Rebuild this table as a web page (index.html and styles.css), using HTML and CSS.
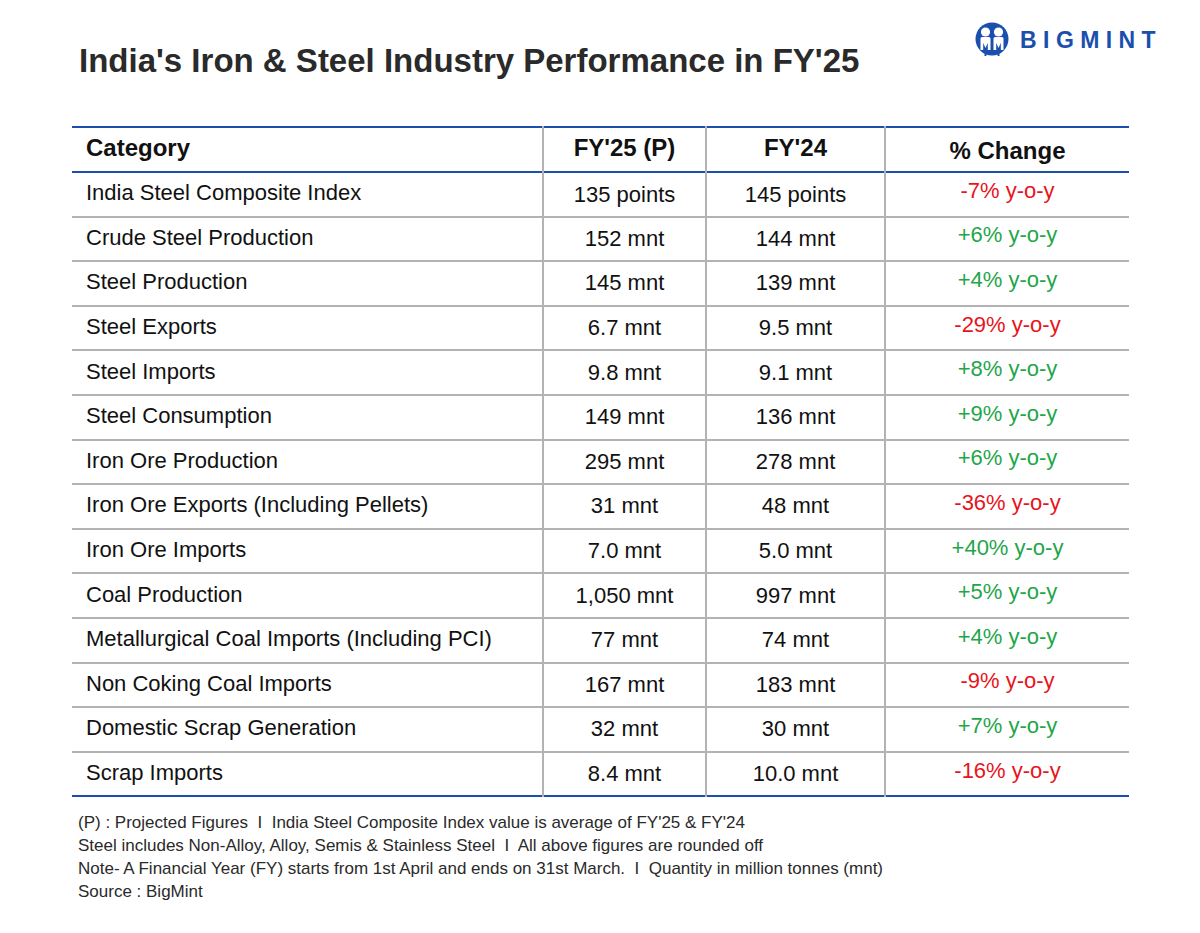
FILE: index.html
```html
<!DOCTYPE html>
<html>
<head>
<meta charset="utf-8">
<link rel="stylesheet" href="styles.css">
</head>
<body>
<div class="page">
  <header class="top">
    <h1 class="title">India's Iron &amp; Steel Industry Performance in FY'25</h1>
    <div class="logo">
      <svg class="logo-icon" width="34" height="36" viewBox="0 0 34 36">
        <circle cx="17" cy="17" r="16.5" fill="#1b4fae"/>
        <circle cx="10.5" cy="10" r="4.6" fill="#fff"/>
        <circle cx="23.5" cy="10" r="4.6" fill="#fff"/>
        <path d="M5.5 16.5 Q5.5 15 7 15 L14 15 Q15.5 15 15.5 16.5 L15.5 28 L12.8 28 L12.8 21 L10.5 26 L8.2 21 L8.2 28 L5.5 28 Z" fill="#fff"/>
        <path d="M18.5 16.5 Q18.5 15 20 15 L27 15 Q28.5 15 28.5 16.5 L28.5 28 L25.8 28 L25.8 21 L23.5 26 L21.2 21 L21.2 28 L18.5 28 Z" fill="#fff"/>
        <rect x="9.5" y="30" width="2" height="4" fill="#1b4fae"/>
        <rect x="22.5" y="30" width="2" height="4" fill="#1b4fae"/>
      </svg>
      <span class="logo-text">BIGMINT</span>
    </div>
  </header>

  <table class="data">
    <colgroup>
      <col class="c1"><col class="c2"><col class="c3"><col class="c4">
    </colgroup>
    <thead>
      <tr><th class="left">Category</th><th>FY'25 (P)</th><th>FY'24</th><th class="chg-h">% Change</th></tr>
    </thead>
    <tbody>
      <tr><td class="left">India Steel Composite Index</td><td class="lo">135 points</td><td class="lo">145 points</td><td class="neg">-7% y-o-y</td></tr>
      <tr><td class="left">Crude Steel Production</td><td>152 mnt</td><td>144 mnt</td><td class="pos">+6% y-o-y</td></tr>
      <tr><td class="left">Steel Production</td><td>145 mnt</td><td>139 mnt</td><td class="pos">+4% y-o-y</td></tr>
      <tr><td class="left">Steel Exports</td><td>6.7 mnt</td><td>9.5 mnt</td><td class="neg">-29% y-o-y</td></tr>
      <tr><td class="left">Steel Imports</td><td>9.8 mnt</td><td>9.1 mnt</td><td class="pos">+8% y-o-y</td></tr>
      <tr><td class="left">Steel Consumption</td><td>149 mnt</td><td>136 mnt</td><td class="pos">+9% y-o-y</td></tr>
      <tr><td class="left">Iron Ore Production</td><td>295 mnt</td><td>278 mnt</td><td class="pos">+6% y-o-y</td></tr>
      <tr><td class="left">Iron Ore Exports (Including Pellets)</td><td>31 mnt</td><td>48 mnt</td><td class="neg">-36% y-o-y</td></tr>
      <tr><td class="left">Iron Ore Imports</td><td>7.0 mnt</td><td>5.0 mnt</td><td class="pos">+40% y-o-y</td></tr>
      <tr><td class="left">Coal Production</td><td>1,050 mnt</td><td>997 mnt</td><td class="pos">+5% y-o-y</td></tr>
      <tr><td class="left">Metallurgical Coal Imports (Including PCI)</td><td>77 mnt</td><td>74 mnt</td><td class="pos">+4% y-o-y</td></tr>
      <tr><td class="left">Non Coking Coal Imports</td><td>167 mnt</td><td>183 mnt</td><td class="neg">-9% y-o-y</td></tr>
      <tr><td class="left">Domestic Scrap Generation</td><td>32 mnt</td><td>30 mnt</td><td class="pos">+7% y-o-y</td></tr>
      <tr><td class="left">Scrap Imports</td><td>8.4 mnt</td><td>10.0 mnt</td><td class="neg">-16% y-o-y</td></tr>
    </tbody>
  </table>

  <div class="notes">
    <p>(P) : Projected Figures &nbsp;I&nbsp; India Steel Composite Index value is average of FY'25 &amp; FY'24</p>
    <p>Steel includes Non-Alloy, Alloy, Semis &amp; Stainless Steel &nbsp;I&nbsp; All above figures are rounded off</p>
    <p>Note- A Financial Year (FY) starts from 1st April and ends on 31st March. &nbsp;I&nbsp; Quantity in million tonnes (mnt)</p>
    <p>Source : BigMint</p>
  </div>
</div>
</body>
</html>
```

FILE: styles.css
```css
* { box-sizing: border-box; }
html, body { margin: 0; padding: 0; background: #fff; }
body {
  width: 1200px;
  height: 933px;
  font-family: "Liberation Sans", Arial, sans-serif;
  color: #111;
}
.page {
  padding: 0 71px 0 72px;
}
.top {
  position: relative;
  height: 126px;
}
.title {
  margin: 0;
  padding-top: 42px;
  padding-left: 7px;
  font-size: 33px;
  line-height: 38px;
  font-weight: 700;
  color: #2a2a2a;
  letter-spacing: 0;
}
.logo {
  position: absolute;
  top: 22px;
  right: -27px;
  display: flex;
  align-items: center;
  gap: 11px;
}
.logo-icon { display: block; }
.logo-text {
  font-family: "Liberation Sans", Arial, sans-serif;
  font-weight: 700;
  font-size: 23px;
  letter-spacing: 6.4px;
  color: #1b4fae;
  margin-right: -6px;
}
.data {
  width: 1057px;
  border-collapse: collapse;
  table-layout: fixed;
  border-top: 2px solid #1b4fae;
  border-bottom: 2px solid #1b4fae;
}
.c1 { width: 471px; }
.c2 { width: 163px; }
.c3 { width: 179px; }
.c4 { width: 244px; }
th, td {
  height: 44.6px;
  padding: 0;
  text-align: center;
  font-size: 22px;
  font-weight: 400;
  border-left: 2px solid #b3b3b3;
  border-top: 2px solid #b3b3b3;
  white-space: nowrap;
}
th {
  height: 45px;
  font-weight: 700;
  font-size: 24px;
  border-top: none;
  color: #111;
  padding-bottom: 3px;
}
thead tr { border-bottom: 2px solid #1b4fae; }
tbody tr:first-child td { border-top: none; }
th.left, td.left {
  text-align: left;
  padding-left: 14px;
  border-left: none;
}
th.chg-h { padding-top: 3px; padding-bottom: 0; }
td.lo { padding-top: 1px; }
td.left { padding-bottom: 2px; }
td.neg, td.pos { padding-bottom: 7px; }
td.neg { color: #e8141c; }
td.pos { color: #1fa64a; }
.notes {
  padding: 14px 0 0 6px;
  font-size: 17px;
  color: #2a2a2a;
  line-height: 23px;
}
.notes p { margin: 0; }
```
